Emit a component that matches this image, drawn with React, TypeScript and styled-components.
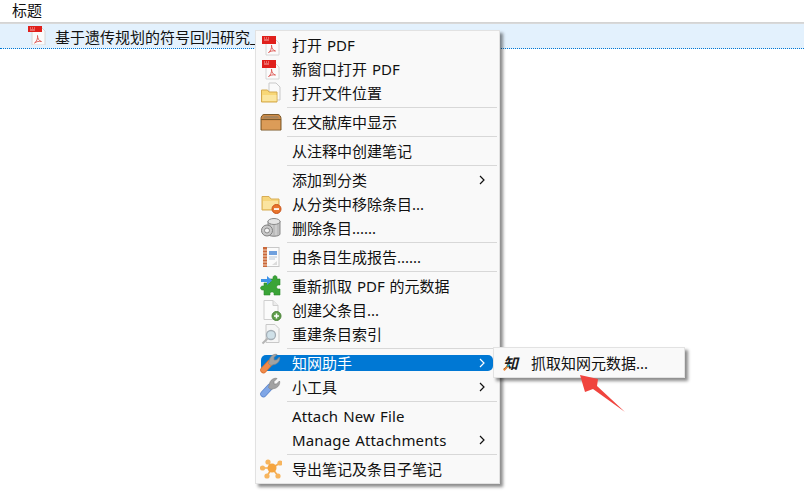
import React from "react";
import styled, { createGlobalStyle } from "styled-components";

const Global = createGlobalStyle`
  html, body { margin: 0; padding: 0; background: #fff; }
  body { font-family: "Noto Sans", "Noto Sans CJK SC", sans-serif; font-size: 15px; color: #111; overflow: hidden; word-spacing: 1px; }
`;
const Page = styled.div`
  position: relative;
  width: 804px;
  height: 495px;
  overflow: hidden;
`;
const Header = styled.div`
  height: 23px;
  box-sizing: border-box;
  padding-left: 12px;
  display: flex;
  align-items: center;
  border-bottom: 1px solid #d4d4d4;
  padding-bottom: 3px;
  line-height: 20px;
`;
const SelectedRow = styled.div`
  height: 26px;
  box-sizing: border-box;
  display: flex;
  align-items: center;
  padding-left: 27px;
  background: #e3f1fd;
  border-top: 1px solid #d9d9d9;
  border-bottom: 1px dotted #0078d4;
  white-space: nowrap;
`;
const RowTitle = styled.span`
  margin-left: 7px;
`;
const Menu = styled.div`
  position: absolute;
  left: 255px;
  top: 30px;
  width: 245px;
  box-sizing: border-box;
  padding: 2px 0;
  background: #f9f9f9;
  border: 1px solid #e2e2e2;
  box-shadow: 3px 3px 3px rgba(0, 0, 0, 0.45);
`;
const Row = styled.div`
  height: 24px;
  box-sizing: border-box;
  padding: 4px 0;
  margin: 0 6px 0 5px;
`;
const RowBody = styled.div<{ $active?: boolean }>`
  height: 16px;
  display: flex;
  align-items: center;
  border-radius: 5px;
  background: ${(p) => (p.$active ? "#0078d4" : "transparent")};
  color: ${(p) => (p.$active ? "#fff" : "#111")};
`;
const IconSlot = styled.span`
  width: 22px;
  height: 22px;
  flex: none;
  margin-left: -1px;
  display: block;
  svg { display: block; }
`;
const Label = styled.span<{ $latin?: boolean }>`
  margin-left: 10px;
  flex: 1;
  white-space: nowrap;
  line-height: 16px;
  letter-spacing: ${(p) => (p.$latin ? "0.14px" : "0")};
`;
const Chevron = styled.svg`
  flex: none;
  margin-right: 8px;
  width: 6px;
  height: 10px;
  fill: none;
  stroke: currentColor;
  stroke-width: 1.2;
`;
const Separator = styled.div`
  height: 1px;
  margin: 2px 2px 2px 31px;
  background: #d8d8d8;
`;
const SubMenu = styled.div`
  position: absolute;
  left: 493px;
  top: 347px;
  width: 192px;
  height: 31px;
  box-sizing: border-box;
  display: flex;
  align-items: center;
  padding-left: 9px;
  background: #f9f9f9;
  border: 1px solid #e2e2e2;
  box-shadow: 3px 3px 3px rgba(0, 0, 0, 0.45);
  white-space: nowrap;
`;
const LogoMark = styled.span`
  position: relative;
  width: 16px;
  height: 18px;
  flex: none;
  font-size: 15px;
  line-height: 18px;
  font-weight: 700;
  font-style: italic;
  color: #1c1c1c;
  svg { position: absolute; left: 0; top: 0; }
`;
const SubLabel = styled.span`
  margin-left: 12px;
`;
const ArrowMark = styled.svg`
  position: absolute;
  left: 575px;
  top: 370px;
  width: 55px;
  height: 48px;
`;

const Svg = ({ children }: { children: React.ReactNode }) => (
  <svg width="22" height="22" viewBox="0 0 22 22">{children}</svg>
);

const Pdf = () => (
  <Svg>
    <path d="M6 6h10l3 3v12H6z" fill="#fbfbfb" stroke="#d6d6d6" />
    <rect x="2" y="2" width="14" height="8" fill="#e0201c" />
    <path d="M4 4h1M6 4h1M8 4h1M4 6h5" stroke="#f5b0ae" strokeWidth="1" />
    <path d="M8.500 18.500c2-1 3.500-4.500 3-7.500 0 3 1.500 5.500 4 6-2.500-.5-5 0-7 1.500z" fill="none" stroke="#e0605c" strokeWidth="1" />
  </Svg>
);
const SmallPdf = () => (
  <svg width="22" height="20" viewBox="0 0 22 20">
    <path d="M6 3h10l3 3v14H6z" fill="#fbfbfb" stroke="#d6d6d6" />
    <rect x="2" y="1" width="14" height="6" fill="#e0201c" />
    <path d="M4 3h1M6 3h1M8 3h1M4 5h5" stroke="#f5b0ae" strokeWidth="1" />
    <path d="M8.500 18c2-1 3.500-4.500 3-7.500 0 3 1.500 5.500 4 6-2.500-.5-5 0-7 1.500z" fill="none" stroke="#e0605c" strokeWidth="1" />
  </svg>
);
const FolderDoc = () => (
  <Svg>
    <path d="M9 1h7l4 4v13H9z" fill="#fafafa" stroke="#c9c9c9" />
    <path d="M1.500 8h6l1.500 2h8v10H1.500z" fill="#f8d776" stroke="#d3a94e" />
    <rect x="2.500" y="13" width="14" height="6" fill="#fbe6a0" />
  </Svg>
);
const Box = () => (
  <Svg>
    <path d="M4 3.500h14c1.500 0 3 2 3 4v11.500H1V7.500c0-2 1.500-4 3-4z" fill="#d08c48" stroke="#7d5a2b" />
    <path d="M1 8.500h20" stroke="#7d5a2b" />
    <rect x="2" y="9.500" width="18" height="9" fill="#dc9c58" />
    <path d="M4.500 5h13l2 2.500h-17z" fill="#a9855c" />
  </Svg>
);
const FolderMinus = () => (
  <Svg>
    <path d="M2 3.500h7l2 2.500h8v11H2z" fill="#f7d67c" stroke="#d8ad55" />
    <rect x="3" y="8" width="15" height="8" fill="#fbe4a0" />
    <circle cx="16.500" cy="16" r="4.500" fill="#e8752d" stroke="#c9541a" />
    <rect x="14" y="15.200" width="5" height="1.700" fill="#fff" />
  </Svg>
);
const Trash = () => (
  <Svg>
    <path d="M8 4v13c0 3 12 3 12 0V4z" fill="#bdbdbd" stroke="#8a8a8a" />
    <path d="M12 7v11M16 7v11" stroke="#dcdcdc" />
    <ellipse cx="14" cy="4.500" rx="6" ry="3" fill="#e4e4e4" stroke="#8a8a8a" />
    <circle cx="7" cy="13.500" r="5.500" fill="#c8c8c8" stroke="#808080" />
    <circle cx="7" cy="13.500" r="2.500" fill="#f2f2f2" stroke="#8a8a8a" />
  </Svg>
);
const Report = () => (
  <Svg>
    <rect x="4" y="1.500" width="15" height="19" fill="#fbfbfb" stroke="#c8c8c8" />
    <rect x="3" y="1" width="4" height="20" fill="#c9683a" />
    <path d="M3 4h4M3 7h4M3 10h4M3 13h4M3 16h4M3 19h4" stroke="#f3d6c0" />
    <rect x="9" y="5" width="8" height="4" fill="#6fa0de" />
    <path d="M9 11h8M9 13h6" stroke="#b9c7d6" />
    <path d="M12 19l5-4v4z" fill="#dcdcdc" />
  </Svg>
);
const Puzzle = () => (
  <Svg>
    <path d="M10 4h3V2.500c0-2.500 4-2.500 4 0V4h3v6h-1.500c-2.500 0-2.500 4 0 4H20v6h-6v-1.500c0-2-4-2-4 0V20H4v-5H2.500c-2.500 0-2.500-4 0-4H4V8h6z" fill="#3aa437" stroke="#2a8a2a" strokeWidth=".6" />
    <path d="M1 4h6V1l5 4.500L7 10V7H1z" fill="#3f93e8" />
  </Svg>
);
const DocPlus = () => (
  <Svg>
    <path d="M4 1.500h9l5 5v14H4z" fill="#fbfbfb" stroke="#cfcfcf" />
    <path d="M13 1.500v5h5" fill="#ececec" stroke="#cfcfcf" />
    <circle cx="16.500" cy="17" r="4.500" fill="#5f9e4a" stroke="#4b8238" />
    <path d="M14 17h5M16.500 14.500v5" stroke="#fff" strokeWidth="1.500" />
  </Svg>
);
const DocSearch = () => (
  <Svg>
    <path d="M6 1.500h9l4 4v14H6z" fill="#f6f6f6" stroke="#c8c8c8" />
    <circle cx="11" cy="12" r="4.500" fill="#cfe0e8" stroke="#a4aeb6" strokeWidth="1.300" />
    <path d="M7.500 15.500L2.500 20.500" stroke="#b5b5b5" strokeWidth="2" />
  </Svg>
);
const Wrench = ({ handle, edge }: { handle: string; edge: string }) => (
  <Svg>
    <path d="M3.500 18L10 11" stroke={edge} strokeWidth="6.500" strokeLinecap="round" />
    <path d="M3.500 18L10 11" stroke={handle} strokeWidth="5" strokeLinecap="round" />
    <path d="M8.500 11.500l1-3.500C10 4 14 1.500 17 2.500L14 5.500v2.500h2.500l3-3c1 3-1.500 7-5.500 7.500l-3 1z" fill="#a2a2a2" stroke="#858585" strokeWidth=".7" />
  </Svg>
);
const Hub = () => (
  <Svg>
    <path d="M12 10L8 4M12 10l8-5M12 10H2M12 10l-5 8M12 10l6 8" stroke="#f5ad52" strokeWidth="1.600" />
    <circle cx="12" cy="10" r="4.500" fill="#f5a53f" />
    <circle cx="8" cy="4" r="2.600" fill="#f7b55e" />
    <circle cx="20" cy="5" r="2.600" fill="#f7b55e" />
    <circle cx="2.500" cy="10" r="2.600" fill="#f7b55e" />
    <circle cx="7" cy="18" r="2.600" fill="#f7b55e" />
    <circle cx="18" cy="18" r="2.600" fill="#f7b55e" />
  </Svg>
);
const CnkiIcon = () => (
  <LogoMark>
    知
    <svg width="16" height="18" viewBox="0 0 16 18">
      <path d="M1 16.500l3.500-4" stroke="#f08a3c" strokeWidth="1.600" />
      <path d="M4.500 12.500l1.500-2" stroke="#2bb3c9" strokeWidth="1.600" />
    </svg>
  </LogoMark>
);

type Item = { label?: string; icon?: React.ReactNode; sub?: boolean; active?: boolean; latin?: boolean };
const items: Item[] = [
  { label: "打开 PDF", icon: <Pdf /> },
  { label: "新窗口打开 PDF", icon: <Pdf /> },
  { label: "打开文件位置", icon: <FolderDoc /> },
  {},
  { label: "在文献库中显示", icon: <Box /> },
  {},
  { label: "从注释中创建笔记" },
  {},
  { label: "添加到分类", sub: true },
  { label: "从分类中移除条目...", icon: <FolderMinus /> },
  { label: "删除条目......", icon: <Trash /> },
  {},
  { label: "由条目生成报告......", icon: <Report /> },
  {},
  { label: "重新抓取 PDF 的元数据", icon: <Puzzle /> },
  { label: "创建父条目...", icon: <DocPlus /> },
  { label: "重建条目索引", icon: <DocSearch /> },
  {},
  { label: "知网助手", icon: <Wrench handle="#f08a4a" edge="#d96f2e" />, sub: true, active: true },
  { label: "小工具", icon: <Wrench handle="#7fa6e6" edge="#5c86cc" />, sub: true },
  {},
  { label: "Attach New File", latin: true },
  { label: "Manage Attachments", sub: true, latin: true },
  {},
  { label: "导出笔记及条目子笔记", icon: <Hub /> },
];

export default function App() {
  return (
    <Page>
      <Global />
      <Header>标题</Header>
      <SelectedRow>
        <IconSlot><SmallPdf /></IconSlot>
        <RowTitle>基于遗传规划的符号回归研究_</RowTitle>
      </SelectedRow>
      <Menu>
        {items.map((it, i) =>
          it.label ? (
            <Row key={i}>
              <RowBody $active={it.active}>
                <IconSlot>{it.icon}</IconSlot>
                <Label $latin={it.latin}>{it.label}</Label>
                {it.sub && (
                  <Chevron viewBox="0 0 6 10"><path d="M1 1l4 4-4 4" /></Chevron>
                )}
              </RowBody>
            </Row>
          ) : (
            <Separator key={i} />
          )
        )}
      </Menu>
      <SubMenu>
        <CnkiIcon />
        <SubLabel>抓取知网元数据...</SubLabel>
      </SubMenu>
      <ArrowMark viewBox="0 0 55 48">
        <path d="M5 5L23 9L22 16L50 42L18 19L10 22Z" fill="#f0443e" />
      </ArrowMark>
    </Page>
  );
}
